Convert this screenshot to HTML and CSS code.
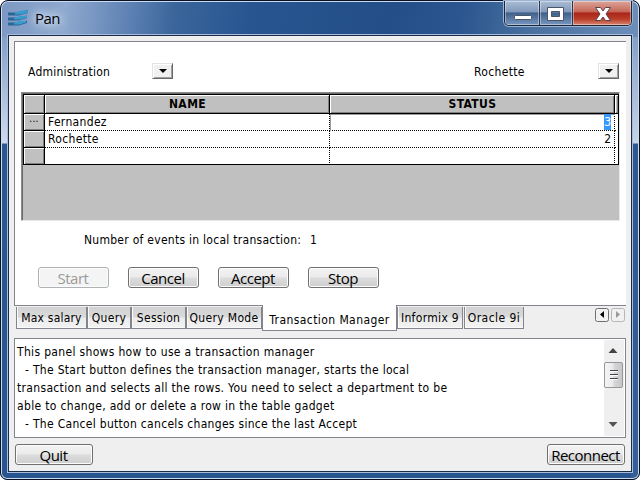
FILE: index.html
```html
<!DOCTYPE html>
<html lang="en">
<head>
<meta charset="utf-8">
<title>Pan</title>
<link rel="stylesheet" href="styles.css">
</head>
<body>
<div class="window">
  <header class="titlebar">
    <svg class="logo" width="22" height="18" viewBox="0 0 22 18">
      <path fill="#2a6799" d="M0 3.500H8L20 1V4L11 6.500H0ZM0 8.500H8L19 6.500V9L11 11.500H0ZM0 13.500H8L19 11.500V14L11 16.500H0Z"/>
      <path fill="#3a9acb" d="M7 3.500 14 1.500H20V3.500L13 5.500H7ZM6 9 12 7H19V8.500L12 10.500H6ZM6 14 12 12H18V13.500L12 15.500H6Z"/>
    </svg>
    <h1 class="title">Pan</h1>
    <div class="controls">
      <div class="control"><svg width="34" height="22"><rect x="9.500" y="12.500" width="17" height="4" rx="1" fill="#fff" stroke="#4b5568"/></svg></div>
      <div class="control"><svg width="32" height="22"><path fill="#fff" fill-rule="evenodd" stroke="#4b5568" d="M7.500 4.500h16v13h-16zM11.500 8.500v5h8v-5z"/></svg></div>
      <div class="control close"><svg width="58" height="22"><path fill="#fff" stroke="#59424e" stroke-linejoin="round" d="M22.500 4.500h5l2.500 3.500 2.500-3.500h5l-4.500 6.500 4.500 6.500h-5l-2.500-3.500-2.500 3.500h-5l4.500-6.500z"/></svg></div>
    </div>
  </header>
  <main class="client">
    <section class="page">
      <div class="selectors">
        <span class="t-admin">Administration</span><i class="drop"></i>
        <span class="t-person">Rochette</span><i class="drop"></i>
      </div>
      <div class="table-well">
        <div class="table">
          <div class="head"></div><div class="head">NAME</div><div class="head">STATUS</div><div class="head"></div>
          <div class="rowhead">...</div><div class="cell">Fernandez</div><div class="cell num edit"><span class="picked">3</span></div><div class="cell end"></div>
          <div class="rowhead"></div><div class="cell">Rochette</div><div class="cell num">2</div><div class="cell end"></div>
          <div class="rowhead"></div><div class="cell last"></div><div class="cell last"></div><div class="cell end last"></div>
        </div>
      </div>
      <p class="events"><span class="t-events">Number of events in local transaction:</span><span>1</span></p>
      <div class="actions">
        <button class="btn" disabled>Start</button>
        <button class="btn">Cancel</button>
        <button class="btn">Accept</button>
        <button class="btn">Stop</button>
      </div>
    </section>
    <nav class="tabs">
      <span class="tab w-max">Max salary</span><span class="tab w-query">Query</span><span class="tab w-session">Session</span><span class="tab w-mode">Query Mode</span><span class="tab active">Transaction Manager</span><span class="tab w-informix">Informix 9</span><span class="tab w-oracle">Oracle 9i</span>
      <div class="scrollers">
        <svg width="14" height="14"><rect class="frame" x=".5" y=".5" width="13" height="13" rx="2"/><path d="M9 3v7L5 6.500z"/></svg>
        <svg class="off" width="14" height="14"><rect class="frame" x=".5" y=".5" width="13" height="13" rx="2"/><path d="M5 3v7l4-3.500z"/></svg>
      </div>
    </nav>
    <section class="help">
      <div class="help-text">
        <p>This panel shows how to use a transaction manager</p>
        <p class="item">- The Start button defines the transaction manager, starts the local</p>
        <p>transaction and selects all the rows. You need to select a department to be</p>
        <p>able to change, add or delete a row in the table gadget</p>
        <p class="item">- The Cancel button cancels changes since the last Accept</p>
      </div>
      <div class="scrollbar">
        <svg width="18" height="22"><path fill="#444" d="M4.500 13h9L9 8z"/></svg>
        <div class="thumb"><i></i><i></i><i></i></div>
        <svg class="down" width="18" height="20"><path fill="#555" d="M4.500 6h9L9 11z"/></svg>
      </div>
    </section>
    <footer class="footer">
      <button class="btn">Quit</button>
      <button class="btn wide">Reconnect</button>
    </footer>
  </main>
</div>
</body>
</html>
```
FILE: styles.css
```css
* { box-sizing: border-box; }
body { margin: 0; background: #fff; color: #000; font: 12px/18px "DejaVu Sans Condensed", "DejaVu Sans", sans-serif; font-stretch: condensed; letter-spacing: .33px; }
p, h1 { margin: 0; font-size: inherit; font-weight: normal; }

.window {
  width: 640px; height: 480px; padding: 0 6px 6px 7px;
  border: 1px solid #0a1020; border-radius: 8px 8px 7px 7px;
  box-shadow: inset 0 0 0 1px #c9dcf2;
  background:
    linear-gradient(97deg, #7c98c2 0, #8fa9cf 65px, #6487b7 120px, #3a659b 175px, #285590 250px, #234e87 390px, #2b568f 460px, #49709f 530px, #6e8fba 640px) 0 0 / 100% 36px no-repeat,
    linear-gradient(#7f9dc6 30px, #d0dbea 142px, #2b588f 143px, #285490) 0 0 / 8px 100% no-repeat,
    linear-gradient(#7f9dc6 30px, #c9d5e6 142px, #2b588f 143px, #355f98) 100% 0 / 8px 100% no-repeat,
    #285490;
}
.titlebar { display: flex; height: 33px; }
.logo { margin: 8px 0 0; }
.title { flex: 1; margin: 7px 0 0 5px; font: 15px/20px "Open Sans", sans-serif; letter-spacing: -.6px; text-shadow: 0 0 6px #dce8f8, 0 0 10px #dce8f8, 0 0 14px #dce8f8; }
.controls { display: flex; width: 128px; height: 25px; margin-right: 1px; border: 1px solid #1b2638; border-top: 0; border-radius: 0 0 5px 5px; box-shadow: 0 0 0 1px #9db3d3; overflow: hidden; }
.control { width: 35px; height: 24px; border-right: 1px solid #29384f; background: linear-gradient(#aabdd5, #8299bb 45%, #40608c 50%, #7797c0); box-shadow: inset 0 0 0 1px #ffffff66; }
.control + .control { width: 33px; }
.control.close { flex: 1; width: auto; border: 0; background: linear-gradient(#dba69b, #c66757 45%, #a92619 50%, #b93c28 75%, #d78570); }
.control svg { display: block; margin-top: 2px; }

.client { width: 624px; height: 437px; margin-top: 1px; padding: 5px 5px 0; border: 1px solid #1a2c49; outline: 1px solid #a7bddb; background: #efefef; }
.page { width: 612px; height: 265px; border: 1px solid #84848c; border-right: 0; background: #fff; }

.selectors { display: flex; height: 50px; padding: 21px 0 0 13px; }
.t-admin { width: 124px; letter-spacing: .22px; }
.t-person { width: 124px; margin-left: 301px; }
.drop { width: 21px; height: 16px; border: 1px solid #e3e3e3; border-right-color: #696969; border-bottom-color: #696969; background: #f0f0f0; box-shadow: inset 1px 1px #fff, inset -1px -1px #a0a0a0; display: grid; place-items: center; }
.drop::after { content: ""; border: 4px solid transparent; border-top-color: #000; border-bottom: 0; }

.table-well { width: 599px; height: 129px; margin: 0 0 0 6px; padding: 1px; border: 1px solid #8b8b8b; border-right-color: #e8e8e8; border-bottom-color: #e8e8e8; background: #c0c0c0; box-shadow: inset 1px 1px #696969; }
.table { display: grid; width: 596px; height: 71px; border: 1px solid #000; grid-template-columns: 21px 285px 285px 3px; grid-template-rows: 19px 17px 17px 16px; background: #fff; }
.head, .rowhead { border-right: 1px solid #000; border-bottom: 1px solid #000; background: #c0c0c0; box-shadow: inset 1px 1px #fff, inset -1px -1px #808080; text-align: center; }
.head { padding-left: 1px; font-weight: bold; letter-spacing: .4px; }
.head:nth-child(4) { border-right: 0; }
.rowhead { line-height: 10px; font-size: 10px; }
.rowhead:nth-child(13) { border-bottom: 0; }
.cell { padding-left: 3px; line-height: 17px; background: repeating-linear-gradient(90deg, #000 0 1px, #fff 1px 2px) 0 100% / 100% 1px no-repeat, repeating-linear-gradient(#000 0 1px, #fff 1px 2px) 100% 0 / 1px 100% no-repeat; }
.cell.last { background: repeating-linear-gradient(#000 0 1px, #fff 1px 2px) 100% 0 / 1px 100% no-repeat; }
.cell.end { background: repeating-linear-gradient(90deg, #000 0 1px, #fff 1px 2px) 0 100% / 2px 1px no-repeat; }
.cell.end.last { background: none; }
.num { padding-right: 4px; text-align: right; letter-spacing: 0; }
.edit { box-shadow: inset 1px 1px #9a9aa0; }
.picked { display: inline-block; height: 16px; background: #3399ff; color: #fff; }

.events { display: flex; gap: 9px; margin: 10px 0 0 69px; }
.t-events { width: 217px; letter-spacing: .27px; white-space: nowrap; }
.actions { display: flex; gap: 19px; margin: 18px 0 0 23px; }
.btn { width: 71px; height: 21px; padding: 0 1px 0 0; border: 1px solid #707070; border-radius: 3px; background: linear-gradient(#f3f3f3, #ebebeb 48%, #dcdcdc 52%, #cfcfcf); box-shadow: inset 0 0 0 1px #fcfcfc; color: #000; font: 15px/20px "Open Sans", sans-serif; letter-spacing: -.5px; text-align: center; white-space: nowrap; }
.btn:disabled { border-color: #adb2b5; background: #f4f4f4; color: #9b9b9b; }

.tabs { display: flex; align-items: flex-start; height: 32px; padding-left: 2px; }
.tab { height: 22px; margin-top: 1px; padding-top: 2px; border: 1px solid #84848c; border-top: 0; background: linear-gradient(#d2d2d2 0, #dadada 48%, #ececec 52%, #f2f2f2); text-align: center; white-space: nowrap; box-shadow: inset 1px -1px #fafafa; }
.w-max { width: 71px; letter-spacing: .2px; }
.w-query { width: 44px; }
.w-session { width: 55px; }
.w-mode { width: 76px; }
.tab.active { width: 135px; height: 26px; margin-top: -1px; padding-top: 6px; background: #fff; box-shadow: none; letter-spacing: .42px; }
.w-informix { width: 66px; }
.w-oracle { width: 60px; margin-left: 1px; letter-spacing: .45px; }
.scrollers { display: flex; gap: 2px; margin: 2px 0 0 auto; padding-right: 1px; }
.scrollers .frame { fill: #f1f1f1; stroke: #707070; }
.scrollers .off .frame { stroke: #b5b5b5; }
.scrollers .off path { fill: #999; }

.help { display: flex; width: 612px; height: 100px; border: 1px solid #84848c; background: #fff; }
.help-text { flex: 1; padding: 4px 0 0 2px; white-space: nowrap; }
.item { padding-left: 8px; letter-spacing: .3px; }
.scrollbar { display: flex; flex-direction: column; width: 20px; height: 96px; margin: 1px 1px 0 0; padding: 0 1px 0 0; background: #efefef; }
.thumb { display: flex; flex-direction: column; align-items: center; justify-content: center; gap: 2px; width: 19px; height: 26px; border: 1px solid #979797; border-radius: 2px; background: linear-gradient(90deg, #f5f5f5, #e9e9eb 48%, #d8d8da 52%, #c6c6c8); }
.thumb i { width: 8px; height: 2px; border-top: 1px solid #444; border-bottom: 1px solid #fff; }
.scrollbar .down { margin-top: auto; }

.footer { display: flex; justify-content: space-between; width: 611px; padding: 6px 0 0 1px; }
.footer .btn { width: 78px; }
```
